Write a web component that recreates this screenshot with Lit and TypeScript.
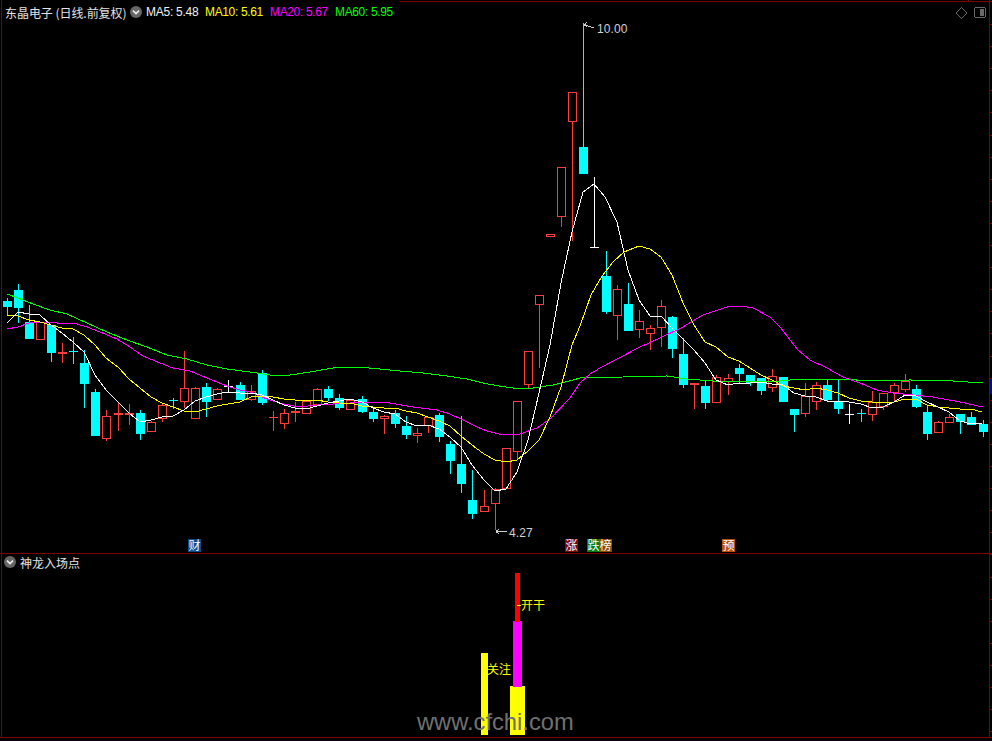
import { LitElement, html, css, svg } from "lit";
import { customElement } from "lit/decorators.js";

type K = "c" | "r" | "w";
// x, wick top, body top, body bottom, wick bottom, kind
const CANDLES: [number, number, number, number, number, K][] = [
  [7, 298, 301, 307, 315, "c"], [18, 284, 290, 308, 323, "c"], [29, 305, 322, 339, 339, "c"],
  [40, 322, 322, 340, 340, "r"], [51, 325, 325, 353, 362, "c"], [62, 343, 352, 354, 363, "r"],
  [73, 337, 351, 351, 364, "c"], [84, 350, 363, 384, 408, "c"], [95, 389, 392, 436, 436, "c"],
  [106, 410, 416, 439, 441, "r"], [118, 403, 413, 414, 431, "r"], [129, 404, 413, 414, 425, "r"],
  [140, 410, 413, 434, 440, "c"], [151, 421, 422, 432, 432, "r"], [162, 403, 405, 419, 422, "r"],
  [173, 398, 400, 400, 409, "c"], [184, 351, 388, 402, 408, "r"], [195, 387, 388, 419, 419, "r"],
  [206, 383, 387, 402, 417, "c"], [217, 388, 389, 400, 400, "r"], [228, 380, 386, 386, 393, "w"],
  [240, 382, 385, 400, 400, "c"], [251, 385, 391, 400, 401, "r"], [262, 370, 373, 403, 405, "c"],
  [273, 411, 417, 417, 431, "r"], [284, 409, 413, 424, 429, "r"], [295, 402, 411, 412, 422, "r"],
  [306, 400, 401, 414, 414, "r"], [317, 388, 389, 405, 405, "r"], [328, 386, 389, 398, 401, "c"],
  [339, 394, 398, 408, 410, "c"], [350, 399, 400, 410, 410, "r"], [362, 396, 399, 412, 413, "c"],
  [373, 407, 412, 419, 422, "c"], [384, 415, 416, 419, 434, "r"], [395, 410, 413, 424, 428, "c"],
  [406, 416, 426, 435, 439, "c"], [417, 428, 433, 436, 443, "r"], [428, 417, 417, 426, 433, "r"],
  [439, 413, 415, 437, 442, "c"], [450, 441, 444, 461, 474, "c"], [461, 416, 464, 484, 493, "c"],
  [472, 470, 500, 514, 519, "c"], [484, 490, 506, 512, 512, "r"], [495, 488, 489, 504, 530, "r"],
  [506, 448, 448, 489, 489, "r"], [517, 401, 401, 452, 460, "r"], [528, 351, 351, 385, 389, "r"],
  [539, 295, 295, 305, 368, "r"], [550, 234, 234, 237, 237, "r"], [561, 167, 167, 217, 227, "r"],
  [572, 92, 92, 122, 241, "r"], [583, 23, 147, 174, 174, "c"], [594, 177, 247, 247, 247, "w"],
  [606, 251, 276, 312, 314, "c"], [617, 285, 289, 316, 340, "r"], [628, 283, 304, 331, 331, "c"],
  [639, 310, 321, 330, 338, "r"], [650, 325, 328, 334, 350, "r"], [661, 300, 306, 328, 347, "r"],
  [672, 316, 317, 349, 358, "c"], [683, 338, 354, 385, 388, "c"], [694, 383, 383, 384, 409, "r"],
  [705, 380, 386, 403, 409, "c"], [716, 375, 377, 403, 403, "r"], [728, 374, 378, 382, 395, "r"],
  [739, 364, 368, 374, 383, "c"], [750, 375, 375, 383, 386, "c"], [761, 378, 378, 391, 395, "c"],
  [772, 369, 376, 388, 392, "r"], [783, 377, 377, 402, 402, "c"], [794, 409, 409, 415, 432, "c"],
  [805, 383, 396, 414, 417, "r"], [816, 382, 385, 402, 410, "r"], [827, 380, 385, 400, 401, "c"],
  [838, 380, 401, 409, 414, "c"], [849, 404, 414, 414, 424, "w"], [861, 409, 413, 413, 422, "c"],
  [872, 391, 402, 415, 421, "r"], [883, 393, 393, 407, 410, "r"], [894, 383, 385, 393, 401, "r"],
  [905, 374, 381, 390, 392, "r"], [916, 385, 389, 407, 408, "c"], [927, 406, 412, 434, 440, "c"],
  [938, 421, 422, 433, 433, "r"], [949, 414, 417, 423, 423, "r"], [960, 414, 414, 422, 434, "c"],
  [971, 412, 417, 425, 425, "c"], [983, 420, 424, 432, 437, "c"],
];

const MA5 = "7,323 18,312 29,314 40,315 51,325 62,333 73,342 84,352 95,375 106,390 118,402 129,413 140,422 151,420 162,417 173,416 184,410 195,401 206,397 217,394 228,392 240,393 251,393 262,395 273,400 284,405 295,408 306,409 317,406 328,403 339,401 350,399 362,402 373,408 384,412 395,414 406,422 417,426 428,425 439,429 450,437 461,447 472,465 484,480 495,491 506,489 517,472 528,440 539,393 550,345 561,283 572,232 583,192 594,184 605,197 617,222 628,270 639,300 650,316 661,316 672,328 683,339 694,350 705,363 716,380 728,385 739,383 750,383 761,382 772,384 783,385 794,393 805,396 816,397 827,401 838,401 849,402 861,404 872,408 883,407 894,402 905,395 916,396 927,402 938,407 949,412 960,421 971,424 982,423";
const MA10 = "7,315 18,316 29,320 40,322 51,325 62,328 73,329 84,335 95,345 106,358 118,367 129,379 140,388 151,397 162,403 173,407 184,411 195,412 206,409 217,406 228,404 240,402 251,397 262,396 273,397 284,399 295,400 306,401 317,400 328,402 339,403 350,403 362,406 373,407 384,408 395,408 406,411 417,413 428,417 439,421 450,426 461,436 472,445 484,454 495,460 506,462 517,460 528,451 539,440 550,417 561,387 572,345 580,326 591,295 602,276 613,262 624,252 639,246 650,249 661,257 672,275 683,303 694,325 705,342 716,347 728,357 739,361 750,368 761,375 772,380 783,386 794,388 805,390 816,388 827,390 838,393 849,398 861,401 872,402 883,403 894,402 905,399 916,399 927,405 938,407 949,408 960,409 971,409 982,412";
const MA20 = "7,329 18,327 29,323 40,322 57,323 77,324 87,327 100,332 117,339 130,347 143,356 160,363 173,368 190,371 207,378 227,386 240,390 250,392 267,399 283,404 300,407 317,405 350,403 367,402 390,403 413,407 437,410 450,414 463,420 477,427 487,431 503,435 520,434 537,428 550,419 570,398 580,383 590,374 600,368 617,359 640,347 660,338 683,327 703,315 727,307 740,306 753,308 770,317 780,327 798,350 810,360 827,368 843,377 860,383 877,390 893,393 913,395 933,397 960,402 983,407";
const MA60 = "7,294 18,298 33,304 50,310 67,314 87,323 107,332 127,340 147,347 167,355 187,359 207,365 227,369 250,372 270,375 290,375 310,372 333,368 357,367 380,369 400,371 423,373 447,376 467,379 483,383 499,386 513,388 533,388 553,385 573,380 580,378 623,377 667,376 687,379 713,381 747,382 780,381 800,379 853,379 860,381 910,380 953,381 983,383";

const TICKS = Array.from({ length: 33 }, (_, i) => Math.round(24 + i * 22.1));

const TAGS: [number, number, string, string][] = [
  [188, 13, "财", "blue"], [565, 13, "涨", "maroon"], [587, 13, "跌", "green"],
  [599, 13, "榜", "brown"], [722, 13, "预", "orange"],
];

function candle([x, wt, bt, bb, wb, k]: (typeof CANDLES)[number]) {
  const cls = k === "c" ? "cy" : k === "r" ? "rd" : "wh";
  const wick = svg`
    ${wt < bt ? svg`<line class="${cls}" x1=${x + 0.5} x2=${x + 0.5} y1=${wt} y2=${bt}></line>` : ""}
    ${wb > bb ? svg`<line class="${cls}" x1=${x + 0.5} x2=${x + 0.5} y1=${bb} y2=${wb}></line>` : ""}`;
  if (bb - bt <= 1) {
    return svg`${wick}<rect class="${cls}-fill" x=${x - 4} y=${bt} width="9" height=${bb - bt + 1}></rect>`;
  }
  const body =
    k === "c"
      ? svg`<rect class="cy-fill" x=${x - 4} y=${bt} width="9" height=${bb - bt}></rect>`
      : svg`<rect class="rd-box" x=${x - 3.5} y=${bt + 0.5} width="8" height=${bb - bt - 1}></rect>`;
  return svg`${wick}${body}`;
}

const chevron = html`<svg class="chev" viewBox="0 0 12 12" width="12" height="12">
  <circle cx="6" cy="6" r="6" fill="#666"></circle>
  <path d="M3 4.6 L6 7.6 L9 4.6" fill="none" stroke="#eee" stroke-width="1.6"></path>
</svg>`;

@customElement("app-root")
export class AppRoot extends LitElement {
  static styles = css`
    :host { display: block; width: 992px; height: 741px; background: #000; overflow: hidden; }
    .page { display: flex; flex-direction: column; width: 992px; height: 741px; background: #000; }
    .upper { position: relative; height: 553px; border-bottom: 1px solid #800000; box-sizing: content-box; }
    .lower { position: relative; height: 183px; border-bottom: 1px solid #800000; }
    svg.canvas { display: block; width: 992px; height: 100%; shape-rendering: crispEdges; }
    .legend {
      position: absolute; left: 5px; top: 4px; display: flex; align-items: center; height: 16px;
      font: 12px "Liberation Sans", "Noto Sans CJK SC", sans-serif; color: #e4e4e4; white-space: nowrap;
    }
    .title { width: 125px; font-family: "Noto Sans CJK SC", sans-serif; letter-spacing: -0.05px; }
    .chev { display: block; flex: none; }
    .mas { display: flex; margin-left: 4px; }
    .ma { display: block; font-size: 12px; letter-spacing: -0.35px; }
    .m5 { width: 59px; color: #f2f2f2; letter-spacing: -0.25px; }
    .m10 { width: 65px; color: #ffff00; }
    .m20 { width: 65px; color: #ff00ff; }
    .m60 { width: 60px; color: #00ff00; }
    .legend2 { left: 4px; top: 0; }
    .legend2 .name { margin-left: 4px; font-family: "Noto Sans CJK SC", sans-serif; color: #e4e4e4; }
    line.cy { stroke: #00ffff; } line.rd { stroke: #ff3c3c; } line.wh { stroke: #ffffff; }
    .cy-fill { fill: #00ffff; } .rd-fill { fill: #ff3c3c; } .wh-fill { fill: #ffffff; }
    .rd-box { fill: none; stroke: #ff3c3c; }
    .ml { fill: none; stroke-width: 1; }
    .ma5 { stroke: #ffffff; } .ma10 { stroke: #ffff00; } .ma20 { stroke: #ff00ff; } .ma60 { stroke: #00ff00; }
    .frame { stroke: #800000; }
    .note { font: 12px "Liberation Sans", sans-serif; fill: #d0d0d0; letter-spacing: 0.1px; }
    .arrow { stroke: #d0d0d0; fill: none; }
    .tag-text { font: 12px "Noto Sans CJK SC", sans-serif; fill: #fff; text-anchor: middle; }
    .blue { fill: #0a4a8c; } .maroon { fill: #800808; } .green { fill: #0a7a0a; }
    .brown { fill: #8a4a0a; } .orange { fill: #b8500f; } .navy { fill: #0a0a80; }
    .gray-s { stroke: #6a6a6a; fill: none; } .gray-f { fill: #6a6a6a; }
    .sig-y { fill: #ffff00; } .sig-m { fill: #ff00ff; } .sig-r { fill: #ff0000; }
    .sig-t { font: 12px "Noto Sans CJK SC", sans-serif; fill: #ffff00; }
    .sig-l { stroke: #ffff00; }
    .mark { font: 23.7px "Liberation Sans", Arial, sans-serif; fill: #707070; }
  `;

  render() {
    return html`<div class="page">
      <section class="upper">
        <svg class="canvas" viewBox="0 0 992 553">
          <line class="frame" x1="1.5" x2="1.5" y1="0" y2="553"></line>
          <line class="frame" x1="400" x2="992" y1="1.5" y2="1.5"></line>
          <line class="frame" x1="968.5" x2="968.5" y1="0" y2="2"></line>
          <line class="frame" x1="989.5" x2="989.5" y1="0" y2="553"></line>
          ${TICKS.filter((t) => t < 553).map(
            (t) => svg`<line class="frame" x1="989" x2="992" y1=${t + 0.5} y2=${t + 0.5}></line>`,
          )}
          <rect class="navy" x="990" y="379" width="2" height="15"></rect>
          ${CANDLES.map(candle)}
          <polyline class="ml ma60" points=${MA60}></polyline>
          <polyline class="ml ma20" points=${MA20}></polyline>
          <polyline class="ml ma10" points=${MA10}></polyline>
          <polyline class="ml ma5" points=${MA5}></polyline>
          <path class="arrow" d="M584 24.5 L594 28 M584 24.5 L587 22.5 M584 24.5 L587 27"></path>
          <text class="note" x="597" y="33">10.00</text>
          <path class="arrow" d="M496 531.5 H507 M496 531.5 L499 529 M496 531.5 L499 534"></path>
          <text class="note" x="509" y="537">4.27</text>
          ${TAGS.map(
            ([x, w, t, c]) => svg`<rect class=${c} x=${x} y="539" width=${w} height="13"></rect>
              <text class="tag-text" x=${x + w / 2} y="550">${t}</text>`,
          )}
          <path class="gray-s" d="M961.5 7.5 L967 13 L961.5 18.5 L956 13 Z"></path>
          <rect class="gray-s" x="974.5" y="7.5" width="11" height="10" rx="2"></rect>
          <rect class="gray-f" x="980" y="9" width="4" height="7"></rect>
        </svg>
        <div class="legend">
          <span class="title">东晶电子 (日线.前复权)</span>
          ${chevron}
          <div class="mas">
            <span class="ma m5">MA5: 5.48</span>
            <span class="ma m10">MA10: 5.61</span>
            <span class="ma m20">MA20: 5.67</span>
            <span class="ma m60">MA60: 5.95</span>
          </div>
        </div>
      </section>
      <section class="lower">
        <svg class="canvas" viewBox="0 554 992 183">
          <line class="frame" x1="1.5" x2="1.5" y1="554" y2="737"></line>
          <line class="frame" x1="989.5" x2="989.5" y1="554" y2="737"></line>
          ${TICKS.filter((t) => t >= 554).map(
            (t) => svg`<line class="frame" x1="989" x2="992" y1=${t + 0.5} y2=${t + 0.5}></line>`,
          )}
          <rect class="sig-y" x="481" y="653" width="7" height="82"></rect>
          <rect class="sig-y" x="510" y="686" width="15" height="49"></rect>
          <rect class="sig-m" x="513" y="621" width="9" height="66"></rect>
          <rect class="sig-r" x="515" y="573" width="5" height="49"></rect>
          <text class="sig-t" x="487" y="674">关注</text>
          <line class="sig-l" x1="517" x2="521" y1="605.5" y2="605.5"></line>
          <text class="sig-t" x="521" y="610">开干</text>
          <text class="mark" x="417" y="730">www.cfchi.com</text>
        </svg>
        <div class="legend legend2">
          ${chevron}
          <span class="name">神龙入场点</span>
        </div>
      </section>
    </div>`;
  }
}
